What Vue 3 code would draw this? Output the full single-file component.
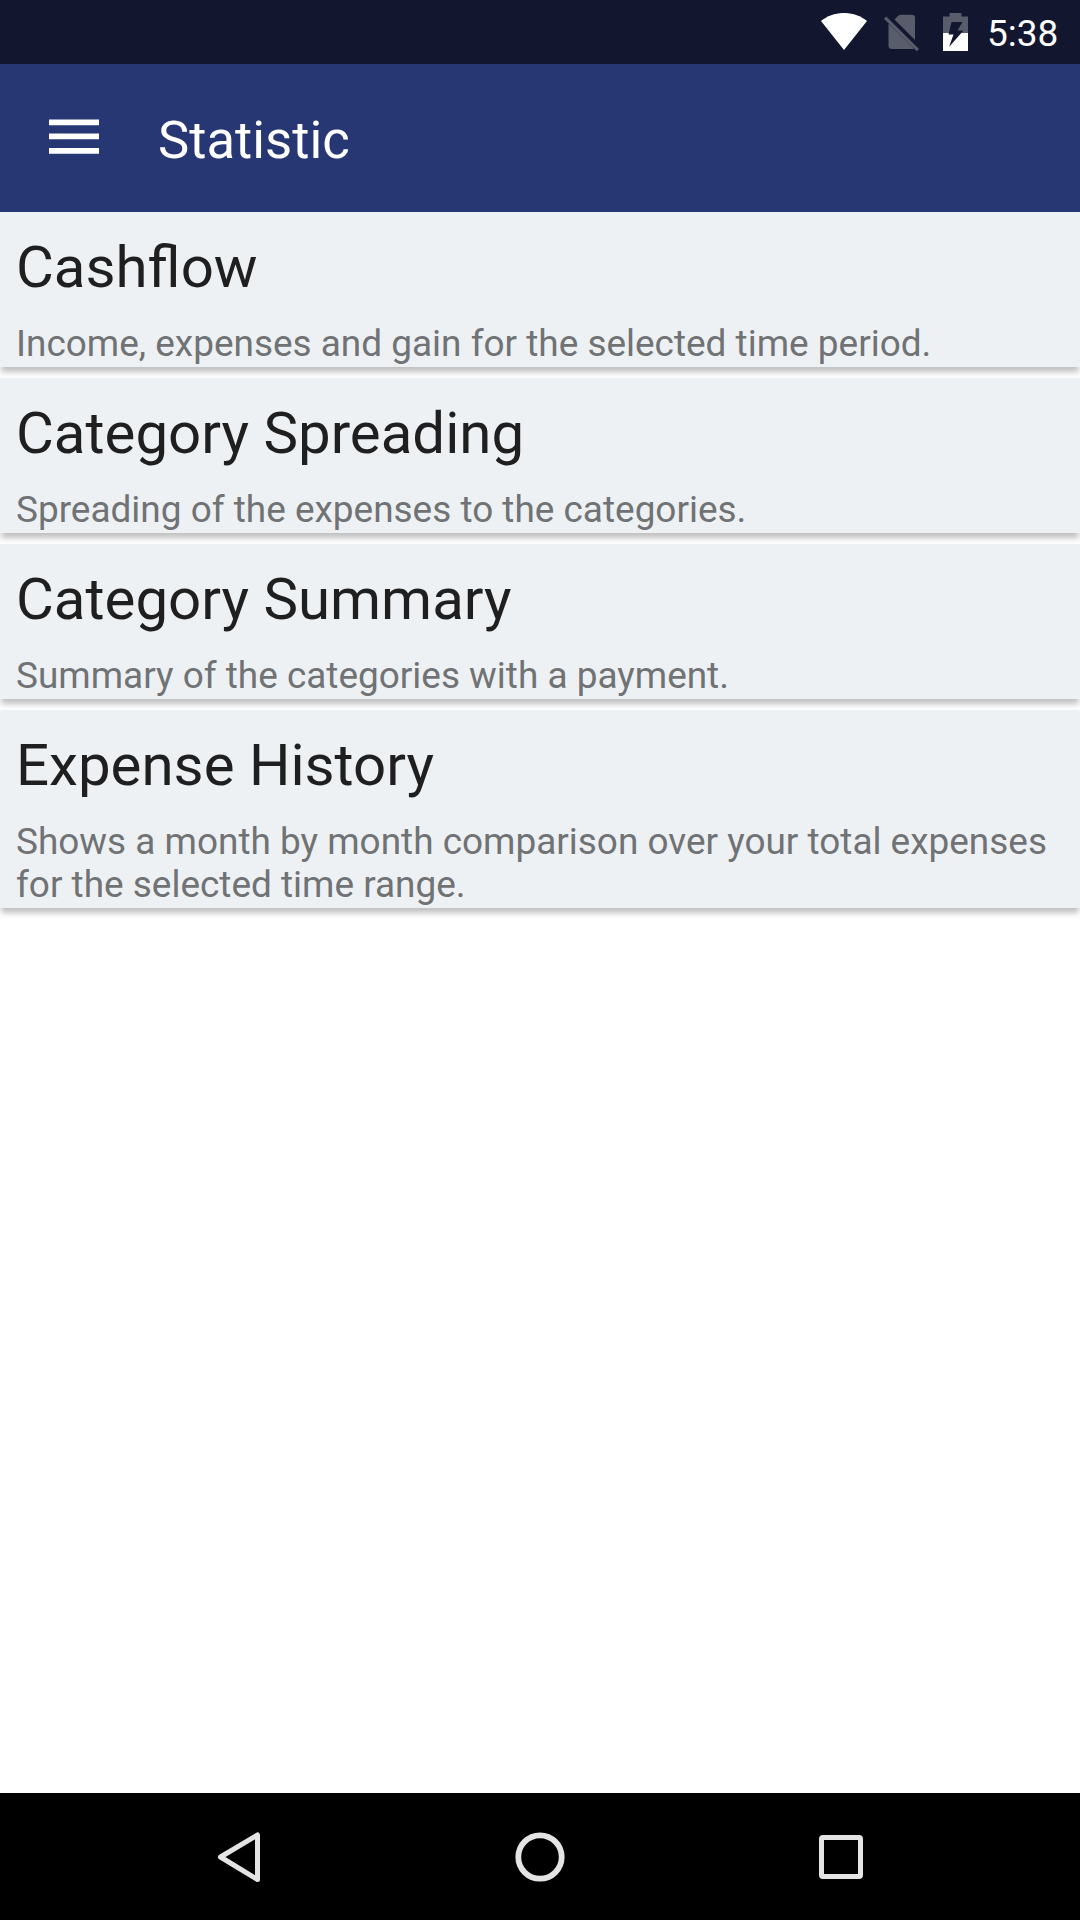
<script setup>
const cards = [
  { title: 'Cashflow', text: 'Income, expenses and gain for the selected time period.' },
  { title: 'Category Spreading', text: 'Spreading of the expenses to the categories.' },
  { title: 'Category Summary', text: 'Summary of the categories with a payment.' },
  { title: 'Expense History', text: 'Shows a month by month comparison over your total expenses for the selected time range.' },
]
</script>

<template>
  <div class="screen">
    <div class="status">
      <svg class="wifi" width="46" height="37" viewBox="0 0 46 37"><path d="M0 8C13-2.700 33-2.700 46 8L23 37Z" fill="#fff" /></svg>
      <svg class="sim" width="36" height="37" viewBox="0 0 36 37" fill="#595c6b">
        <path d="M10.500 5.500L14 2Q15.500 .8 17 .8H28Q31 .8 31 4V26Z" />
        <path d="M4.500 9.500L30 34.500Q29 35 27.500 35H8Q4.500 35 4.500 31.500Z" />
        <path d="M2.200 2.500L35 35L32.800 37.200L0 4.700Z" />
      </svg>
      <svg class="battery" width="25" height="38" viewBox="0 0 25 38">
        <path d="M6.500 0H18.500V3.500H25V20H0V3.500H6.500Z" fill="#595c6b" />
        <path d="M0 20H25V38H0Z" fill="#fff" />
        <path d="M8.500 9H19.500L14.500 17.500H20.500L6 34L10.500 21.500H5.500Z" fill="#12172f" />
      </svg>
      <span class="time">5:38</span>
    </div>
    <header class="toolbar">
      <svg width="50" height="36" viewBox="0 0 50 36" fill="#fff"><path d="M0 .5H50V6.200H0ZM0 14.600H50V20.300H0ZM0 29H50V34.700H0Z" /></svg>
      <h1>Statistic</h1>
    </header>
    <main class="list">
      <section v-for="c in cards" :key="c.title" class="card">
        <h2>{{ c.title }}</h2>
        <p>{{ c.text }}</p>
      </section>
    </main>
    <nav class="nav">
      <svg width="301" height="127" viewBox="0 0 301 127" fill="none" stroke="#e4e4e4" stroke-width="5" stroke-linejoin="round"><path d="M131.500 64L168.500 42V86.500Z" /></svg>
      <svg width="301" height="127" viewBox="0 0 301 127" fill="none" stroke="#e4e4e4" stroke-width="5.800"><circle cx="150" cy="64" r="21.700" /></svg>
      <svg width="301" height="127" viewBox="0 0 301 127" fill="none" stroke="#e4e4e4" stroke-width="5"><rect x="130.500" y="44.500" width="39" height="39" rx="1.500" /></svg>
    </nav>
  </div>
</template>

<style>
body { margin: 0; background: #fff; }
</style>

<style scoped>
.screen { width: 1080px; height: 1920px; display: flex; flex-direction: column; background: #fff; font-family: Roboto, sans-serif; overflow: hidden; }
.status { height: 64px; flex: none; background: #12172f; display: flex; align-items: flex-start; box-sizing: border-box; padding: 13px 0 0 821px; }
.status > * { flex: none; }
.sim { margin: 1px 0 0 17px; }
.battery { margin-left: 23px; }
.time { margin: -1px 0 0 19px; font-size: 37px; line-height: 43px; color: #fff; }
.toolbar { height: 148px; flex: none; background: #263773; display: flex; align-items: flex-start; padding-left: 49px; }
.toolbar svg { margin-top: 55px; }
h1 { margin: 45px 0 0 59px; font-size: 52.6px; line-height: 62px; font-weight: 400; color: #fff; }
.list { flex: 1; display: flex; flex-direction: column; gap: 11px; }
.card { position: relative; background: #edf1f4; padding: 21px 16px 2px; box-shadow: 0 6px 6px -1px rgba(0, 0, 0, .25); }
h2 { margin: 0; font-size: 58.2px; line-height: 68px; font-weight: 400; color: #1f1f1f; }
p { margin: 21px 0 0; font-size: 36.95px; line-height: 43px; color: #707274; }
.nav { height: 127px; flex: none; background: #000; display: flex; padding: 0 88px 0 89px; }
</style>
